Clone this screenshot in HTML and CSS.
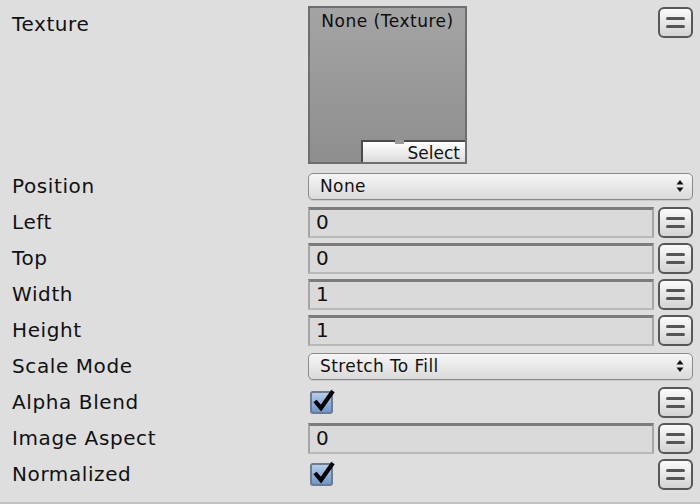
FILE: index.html
```html
<!DOCTYPE html>
<html>
<head>
<meta charset="utf-8">
<link rel="stylesheet" href="styles.css">
</head>
<body>
<div class="inspector">
  <div class="row row-texture">
    <div class="label label-top">Texture</div>
    <div class="control">
      <div class="texture-box">
        <div class="texture-name">None (Texture)</div>
        <div class="select-btn"><span class="notch"></span>Select</div>
      </div>
    </div>
    <div class="menu-cell menu-top"><div class="menu-btn"><i></i><i></i></div></div>
  </div>

  <div class="row">
    <div class="label">Position</div>
    <div class="control wide"><div class="dropdown"><span>None</span>
      <svg class="arrows" width="8" height="14" viewBox="0 0 8 14"><path d="M4 1 L7.5 5.5 H0.5 Z M4 13 L7.5 8.5 H0.5 Z" fill="#111"/></svg></div></div>
  </div>

  <div class="row">
    <div class="label">Left</div>
    <div class="control"><div class="field">0</div></div>
    <div class="menu-cell"><div class="menu-btn"><i></i><i></i></div></div>
  </div>

  <div class="row">
    <div class="label">Top</div>
    <div class="control"><div class="field">0</div></div>
    <div class="menu-cell"><div class="menu-btn"><i></i><i></i></div></div>
  </div>

  <div class="row">
    <div class="label">Width</div>
    <div class="control"><div class="field">1</div></div>
    <div class="menu-cell"><div class="menu-btn"><i></i><i></i></div></div>
  </div>

  <div class="row">
    <div class="label">Height</div>
    <div class="control"><div class="field">1</div></div>
    <div class="menu-cell"><div class="menu-btn"><i></i><i></i></div></div>
  </div>

  <div class="row">
    <div class="label">Scale Mode</div>
    <div class="control wide"><div class="dropdown"><span>Stretch To Fill</span>
      <svg class="arrows" width="8" height="14" viewBox="0 0 8 14"><path d="M4 1 L7.5 5.5 H0.5 Z M4 13 L7.5 8.5 H0.5 Z" fill="#111"/></svg></div></div>
  </div>

  <div class="row">
    <div class="label">Alpha Blend</div>
    <div class="control"><div class="checkbox">
      <svg class="check" width="26" height="26" viewBox="0 0 26 26"><path d="M4 13 L10 20 L22 3" fill="none" stroke="#000" stroke-width="4.2" stroke-linejoin="miter" stroke-linecap="butt"/></svg></div></div>
    <div class="menu-cell"><div class="menu-btn"><i></i><i></i></div></div>
  </div>

  <div class="row">
    <div class="label">Image Aspect</div>
    <div class="control"><div class="field">0</div></div>
    <div class="menu-cell"><div class="menu-btn"><i></i><i></i></div></div>
  </div>

  <div class="row">
    <div class="label">Normalized</div>
    <div class="control"><div class="checkbox">
      <svg class="check" width="26" height="26" viewBox="0 0 26 26"><path d="M4 13 L10 20 L22 3" fill="none" stroke="#000" stroke-width="4.2" stroke-linejoin="miter" stroke-linecap="butt"/></svg></div></div>
    <div class="menu-cell"><div class="menu-btn"><i></i><i></i></div></div>
  </div>
</div>
</body>
</html>
```

FILE: styles.css
```css
html, body {
  margin: 0;
  padding: 0;
  background: #dedede;
}
body {
  width: 700px;
  height: 504px;
  overflow: hidden;
  font-family: "DejaVu Sans", "Liberation Sans", sans-serif;
  font-size: 20px;
  color: #111;
}
.inspector {
  height: 502px;
  border-bottom: 2px solid #c3c3c3;
  box-sizing: content-box;
}
.row {
  display: grid;
  grid-template-columns: 296px 346px 4px 35px;
  height: 36px;
  align-items: center;
  padding-left: 12px;
}
.row-texture {
  height: 168px;
  align-items: start;
}
.label {
  grid-column: 1;
  white-space: nowrap;
  letter-spacing: 0.6px;
  margin-top: -1px;
}
.label-top {
  padding-top: 12px;
  margin-top: 0;
}
.control {
  grid-column: 2;
  display: flex;
  align-items: center;
}
.control.wide {
  grid-column: 2 / 5;
}
.menu-cell {
  grid-column: 4;
}
.menu-top {
  padding-top: 7px;
}

/* texture slot */
.texture-box {
  margin-top: 6px;
  width: 159px;
  height: 158px;
  box-sizing: border-box;
  border: 2px solid #6e6e6e;
  background: linear-gradient(#a4a4a4, #8e8e8e);
  display: flex;
  flex-direction: column;
  align-items: center;
  justify-content: space-between;
}
.texture-name {
  font-size: 17px;
  letter-spacing: 0.5px;
  padding-top: 3px;
  color: #0d0d0d;
}
.select-btn {
  position: relative;
  align-self: flex-end;
  width: 104px;
  height: 22px;
  box-sizing: border-box;
  border-top: 2px solid #4a4a4a;
  border-left: 2px solid #4a4a4a;
  background: linear-gradient(#ffffff, #dcdcdc);
  font-size: 17px;
  line-height: 22px;
  text-align: right;
  padding-right: 5px;
  color: #111;
}
.notch {
  position: absolute;
  top: -2px;
  left: 32px;
  width: 9px;
  height: 4px;
  background: #9a9a9a;
}

/* dropdown */
.dropdown {
  flex: 1;
  height: 27px;
  box-sizing: border-box;
  border: 1px solid #8a8a8a;
  border-radius: 5px;
  background: linear-gradient(#f6f6f6, #dadada);
  display: flex;
  align-items: center;
  justify-content: space-between;
  padding: 0 8px 0 11px;
  font-size: 17px;
  letter-spacing: 0.4px;
  box-shadow: 0 1px 0 #c8c8c8;
}
.arrows {
  display: block;
}

/* number field */
.field {
  flex: 1;
  height: 31px;
  box-sizing: border-box;
  border-top: 3px solid #7c7c7c;
  border-left: 2px solid #a6a6a6;
  border-right: 2px solid #a6a6a6;
  border-bottom: 2px solid #b9b9b9;
  background: #dadada;
  padding-left: 6px;
  font-size: 20px;
  line-height: 25px;
}

/* menu (=) button */
.menu-btn {
  width: 35px;
  height: 31px;
  box-sizing: border-box;
  border: 2px solid #575757;
  border-radius: 6px;
  background: linear-gradient(#fbfbfb, #d3d3d3);
  display: flex;
  flex-direction: column;
  align-items: center;
  justify-content: center;
  gap: 5px;
}
.menu-btn i {
  display: block;
  width: 19px;
  height: 3px;
  border-radius: 1.5px;
  background: #555;
}

/* checkbox */
.checkbox {
  position: relative;
  margin-left: 2px;
  width: 23px;
  height: 23px;
  box-sizing: border-box;
  border: 2px solid #707c8c;
  border-radius: 3px;
  background: linear-gradient(#b4cdeb, #6f97cc);
}
.check {
  position: absolute;
  left: -1px;
  top: -5px;
}
```
